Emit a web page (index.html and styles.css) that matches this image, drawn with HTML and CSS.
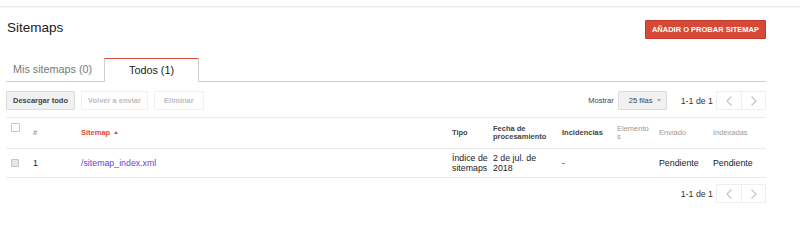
FILE: index.html
```html
<!DOCTYPE html>
<html lang="es">
<head>
<meta charset="utf-8">
<title>Sitemaps</title>
<link rel="stylesheet" href="styles.css">
</head>
<body>
<div class="topbar"></div>
<main class="page">
  <div class="title-row">
    <h1 class="title">Sitemaps</h1>
    <button class="btn-primary">AÑADIR O PROBAR SITEMAP</button>
  </div>
  <div class="tabs">
    <div class="tab">Mis sitemaps (0)</div>
    <div class="tab tab-active">Todos (1)</div>
  </div>
  <div class="toolbar">
    <div class="actions">
      <button class="btn">Descargar todo</button>
      <button class="btn btn-disabled">Volver a enviar</button>
      <button class="btn btn-disabled btn-wide">Eliminar</button>
    </div>
    <div class="pager">
      <span class="show-label">Mostrar</span>
      <div class="select">25 filas <span class="caret"></span></div>
      <span class="range">1-1 de 1</span>
      <div class="nav">
        <span class="nav-btn"><svg width="6" height="10" viewBox="0 0 6 10"><polyline points="5.5,0.5 1,5 5.5,9.5" fill="none" stroke="#c4c4c4" stroke-width="1.2"/></svg></span>
        <span class="nav-btn"><svg width="6" height="10" viewBox="0 0 6 10"><polyline points="0.5,0.5 5,5 0.5,9.5" fill="none" stroke="#c4c4c4" stroke-width="1.2"/></svg></span>
      </div>
    </div>
  </div>
  <table class="grid">
    <colgroup>
      <col class="c-check"><col class="c-num"><col class="c-sitemap"><col class="c-tipo"><col class="c-fecha"><col class="c-inc"><col class="c-elem"><col class="c-env"><col class="c-idx">
    </colgroup>
    <thead>
      <tr>
        <th class="cell-check"><span class="checkbox"></span></th>
        <th class="muted">#</th>
        <th class="sorted">Sitemap <span class="sort-arrow"></span></th>
        <th>Tipo</th>
        <th>Fecha de procesamiento</th>
        <th>Incidencias</th>
        <th class="muted light elem">Elementos</th>
        <th class="muted light">Enviado</th>
        <th class="muted light">Indexadas</th>
      </tr>
    </thead>
    <tbody>
      <tr>
        <td class="cell-check"><span class="checkbox checkbox-disabled"></span></td>
        <td>1</td>
        <td><a class="link" href="#">/sitemap_index.xml</a></td>
        <td>Índice de sitemaps</td>
        <td>2 de jul. de 2018</td>
        <td>-</td>
        <td></td>
        <td>Pendiente</td>
        <td>Pendiente</td>
      </tr>
    </tbody>
  </table>
  <div class="pager pager-bottom">
    <span class="range">1-1 de 1</span>
    <div class="nav">
      <span class="nav-btn"><svg width="6" height="10" viewBox="0 0 6 10"><polyline points="5.5,0.5 1,5 5.5,9.5" fill="none" stroke="#c4c4c4" stroke-width="1.2"/></svg></span>
      <span class="nav-btn"><svg width="6" height="10" viewBox="0 0 6 10"><polyline points="0.5,0.5 5,5 0.5,9.5" fill="none" stroke="#c4c4c4" stroke-width="1.2"/></svg></span>
    </div>
  </div>
</main>
</body>
</html>
```
FILE: styles.css
```css
* { box-sizing: border-box; }
html, body { margin: 0; padding: 0; background: #fff; }
body {
  font-family: "Liberation Sans", Arial, sans-serif;
  color: #222;
  width: 800px;
  height: 244px;
  overflow: hidden;
}
.topbar {
  height: 7px;
  border-bottom: 1px solid #ececec;
  box-shadow: 0 1px 1px rgba(0,0,0,0.03);
}
.page {
  padding: 0 34px 0 6px;
}
.title-row {
  margin-top: 13px;
  height: 20px;
  display: flex;
  justify-content: space-between;
  align-items: flex-start;
}
.title {
  margin: 0 0 0 1px;
  font-size: 13.5px;
  font-weight: normal;
  line-height: 16px;
  color: #222;
}
.btn-primary {
  height: 19px;
  padding: 0 6px;
  background: #d64937;
  border: 1px solid #c53929;
  border-radius: 1px;
  color: #fff;
  font-family: inherit;
  font-weight: bold;
  font-size: 7.5px;
  line-height: 17px;
  letter-spacing: 0;
}
.tabs {
  margin-top: 18px;
  display: flex;
  border-bottom: 1px solid #cfcfcf;
  height: 24px;
}
.tab {
  height: 24px;
  line-height: 23px;
  font-size: 10.8px;
  color: #777;
  padding: 0 11px 0 7px;
  width: 98px;
  white-space: nowrap;
}
.tab-active {
  width: 95px;
  padding: 0;
  text-align: center;
  color: #222;
  background: #fff;
  border-top: 1px solid #dd4b39;
  border-left: 1px solid #cfcfcf;
  border-right: 1px solid #cfcfcf;
  line-height: 22px;
}
.toolbar {
  display: flex;
  justify-content: space-between;
  align-items: center;
  padding: 9px 0 7px;
  border-bottom: 1px solid #ebebeb;
}
.actions { display: flex; gap: 6px; }
.btn {
  height: 19px;
  padding: 0 6px;
  font-family: inherit;
  font-size: 7.5px;
  font-weight: bold;
  line-height: 17px;
  color: #444;
  background: #f1f1f1;
  border: 1px solid #dcdcdc;
  border-radius: 1px;
}
.btn-disabled {
  color: #bdbdbd;
  background: #fff;
  border-color: #efefef;
}
.btn-wide { min-width: 50px; }
.pager {
  display: flex;
  align-items: center;
}
.show-label {
  font-size: 7.5px;
  color: #444;
  margin-right: 4px;
}
.select {
  height: 19px;
  width: 49px;
  padding-left: 10px;
  display: flex;
  align-items: center;
  font-size: 7.5px;
  color: #444;
  background: #f1f1f1;
  border: 1px solid #dcdcdc;
  border-radius: 1px;
}
.caret {
  margin-left: 5px;
  width: 0;
  height: 0;
  border-left: 2.5px solid transparent;
  border-right: 2.5px solid transparent;
  border-top: 3px solid #aaa;
}
.range {
  margin-left: 14px;
  font-size: 8.8px;
  color: #333;
}
.nav {
  margin-left: 3px;
  display: flex;
  height: 19px;
  border: 1px solid #eee;
  border-radius: 1px;
}
.nav-btn {
  width: 24px;
  display: flex;
  align-items: center;
  justify-content: center;
}
.nav-btn + .nav-btn { border-left: 1px solid #eee; width: 24px; }
.grid {
  width: 760px;
  table-layout: fixed;
  border-collapse: separate;
  border-spacing: 0;
}
.c-check { width: 23px; }
.c-num { width: 48px; }
.c-sitemap { width: 371px; }
.c-tipo { width: 41px; }
.c-fecha { width: 69px; }
.c-inc { width: 55px; }
.c-elem { width: 42px; }
.c-env { width: 54px; }
.c-idx { width: 57px; }
.grid th {
  height: 31px;
  padding: 0 0 0 4px;
  text-align: left;
  vertical-align: middle;
  font-size: 7.5px;
  line-height: 8.5px;
  font-weight: bold;
  color: #444;
  border-bottom: 1px solid #ebebeb;
}
.grid th.muted { color: #9a9a9a; }
.grid th.light { font-weight: normal; }
.grid th.elem { padding-right: 5px; word-break: break-all; }
.grid th.sorted { color: #dd4b39; }
.sort-arrow {
  display: inline-block;
  vertical-align: 1px;
  margin-left: 2px;
  width: 0;
  height: 0;
  border-left: 2.5px solid transparent;
  border-right: 2.5px solid transparent;
  border-bottom: 3px solid #dd4b39;
}
.grid td {
  height: 29px;
  padding: 0 0 0 4px;
  vertical-align: middle;
  font-size: 8.8px;
  line-height: 10px;
  color: #222;
  border-bottom: 1px solid #ebebeb;
}
.grid .cell-check { padding-left: 5px; }
.grid th.cell-check { vertical-align: top; padding-top: 5px; }
.checkbox {
  display: block;
  width: 9px;
  height: 9px;
  border: 1px solid #c6c6c6;
  background: #fff;
  border-radius: 1px;
}
.checkbox-disabled {
  width: 8px;
  height: 8px;
  background: #e6e6e6;
  border-color: #c4c4c4;
}
.link {
  color: #6a3fd4;
  text-decoration: none;
}
.pager-bottom {
  justify-content: flex-end;
  margin-top: 6px;
}
```
